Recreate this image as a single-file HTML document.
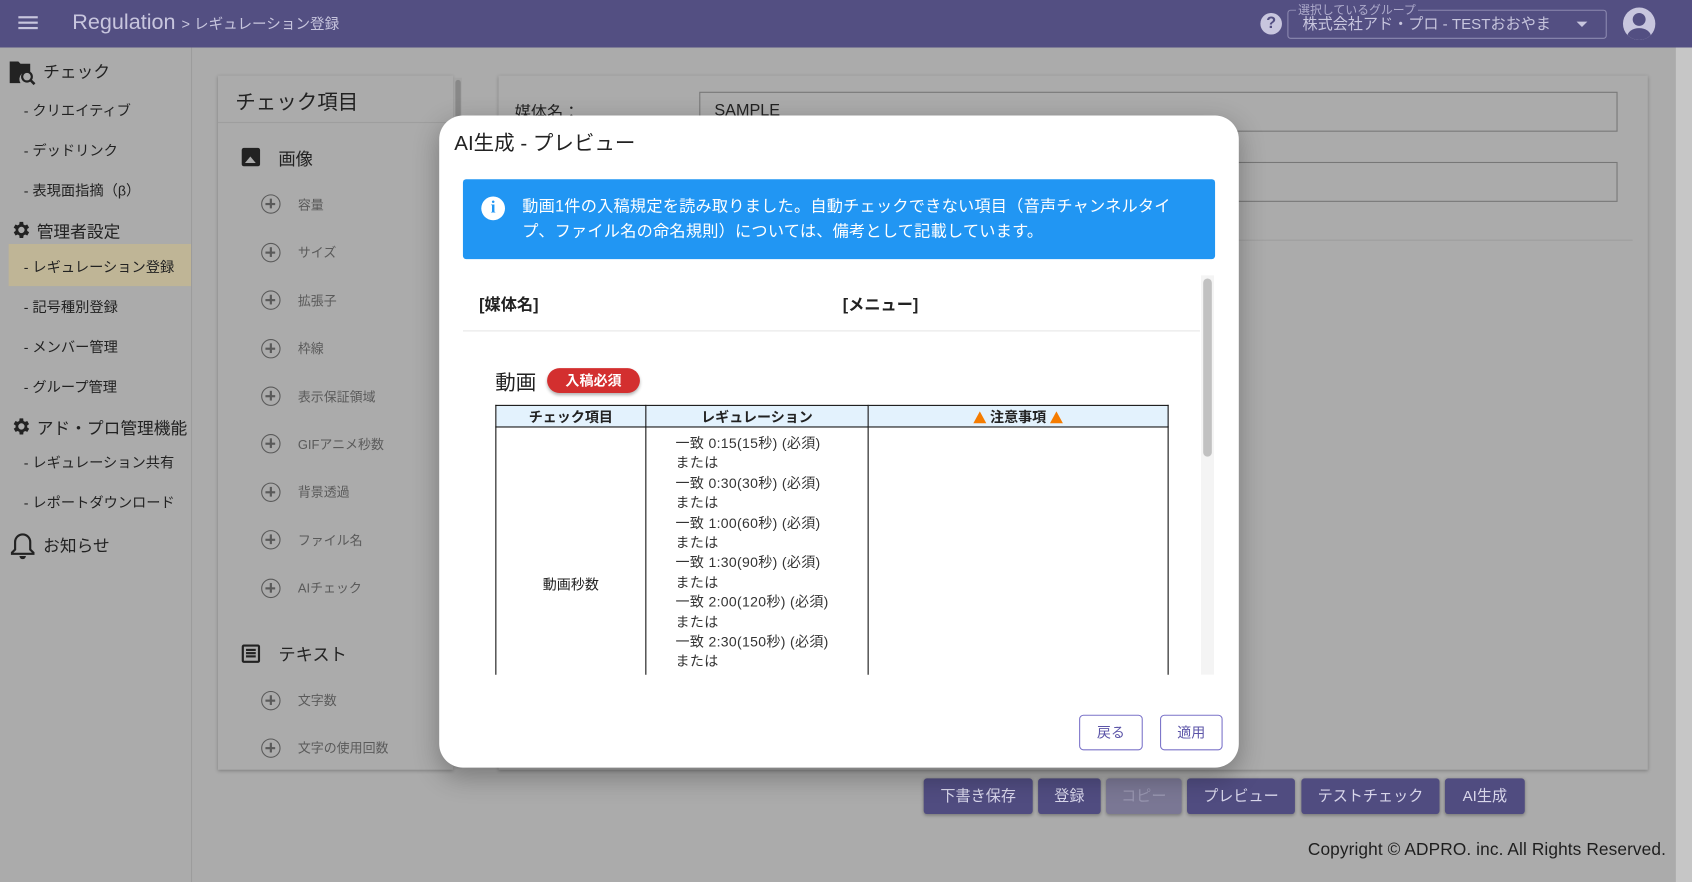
<!DOCTYPE html>
<html><head><meta charset="utf-8"><style>
*{box-sizing:border-box;margin:0;padding:0}
html,body{width:1692px;height:882px;overflow:hidden;background:#ababab}
body{font-family:"Liberation Sans","Noto Sans CJK JP",sans-serif;color:#222}
#w{position:absolute;left:0;top:0;width:1568px;height:817px;transform:scale(1.0791,1.0796);transform-origin:0 0;background:#ababab}
.a{position:absolute;white-space:nowrap}
.hdr{left:0;top:0;width:1568px;height:44px;background:#534f82}
.side{left:0;top:44px;width:178px;height:773px;border-right:1px solid #9c9c9c;background:#ababab}
.si{font-size:13.2px;color:#222;left:22px}
.sh{font-size:15.5px;color:#222}
.ci{font-size:12px;color:#5a5a5a;left:276px}
.pl{left:242px;width:18px;height:18px;border:1.6px solid #5a5a5a;border-radius:50%}
.pl:before,.pl:after{content:"";position:absolute;background:#5a5a5a}
.pl:before{left:3px;top:7px;width:9px;height:1.6px}
.pl:after{left:7px;top:3px;width:1.6px;height:9px}
.btn{top:721px;height:33px;background:#504c80;color:#d8d6ea;font-size:14px;border-radius:3px;text-align:center;line-height:33px;box-shadow:0 1px 3px rgba(0,0,0,.3)}
td,th{border:1px solid #111}
.tri{display:inline-block;width:0;height:0;border:6px solid transparent;border-bottom:11px solid #f57c00;border-top:0;vertical-align:-1px}
</style></head><body><div id="w">
<div class="a hdr"></div>
<div class="a" style="left:17px;top:15px;width:18px;height:2px;background:#c8c6de;box-shadow:0 5px 0 #c8c6de,0 10px 0 #c8c6de"></div>
<div class="a" style="left:67px;top:10px;font-size:20px;color:#c8c6de">Regulation <span style="font-size:13.5px">&gt; レギュレーション登録</span></div>
<div class="a" style="left:1168px;top:12px;width:20px;height:20px;border-radius:50%;background:#c8c6de;color:#534f82;font-size:15px;font-weight:bold;text-align:center;line-height:20px">?</div>
<div class="a" style="left:1193px;top:9px;width:296px;height:27px;border:1px solid #8c89b0;border-radius:3px"></div>
<div class="a" style="left:1201px;top:1px;font-size:11px;color:#aeabcc;background:#534f82;padding:0 2px">選択しているグループ</div>
<div class="a" style="left:1207px;top:12px;font-size:14px;color:#c8c6de">株式会社アド・プロ - TESTおおやま</div>
<div class="a" style="left:1461px;top:20px;border:5px solid transparent;border-top-color:#c8c6de"></div>
<div class="a" style="left:1504px;top:7px;width:30px;height:30px;border-radius:50%;background:#c8c6de;overflow:hidden"><div style="position:absolute;left:9px;top:5px;width:12px;height:12px;border-radius:50%;background:#534f82"></div><div style="position:absolute;left:4px;top:19px;width:22px;height:16px;border-radius:50%;background:#534f82"></div></div>

<div class="a side"></div>
<div class="a" style="left:8px;top:226px;width:169px;height:39px;background:#bfb596"></div>
<svg class="a" style="left:8px;top:54px" width="26" height="26" viewBox="0 0 26 26"><path d="M1 3h8l2 2h9v8a7 7 0 0 0-9 10H1z" fill="#222"/><circle cx="17" cy="17" r="4.5" fill="none" stroke="#222" stroke-width="2"/><path d="M20 20l4 4" stroke="#222" stroke-width="2.4"/></svg>
<div class="a sh" style="left:40px;top:55px">チェック</div>
<div class="a si" style="top:92px">- クリエイティブ</div>
<div class="a si" style="top:129px">- デッドリンク</div>
<div class="a si" style="top:166px">- 表現面指摘（β）</div>
<svg class="a" style="left:9px;top:203px" width="20" height="20" viewBox="0 0 24 24"><path fill="#222" d="M19.4 13a7.5 7.5 0 0 0 0-2l2.1-1.6-2-3.5-2.5 1a7.3 7.3 0 0 0-1.7-1L15 3h-4l-.4 2.9a7.3 7.3 0 0 0-1.7 1l-2.5-1-2 3.5L6.6 11a7.5 7.5 0 0 0 0 2l-2.1 1.6 2 3.5 2.5-1a7.3 7.3 0 0 0 1.7 1L11 21h4l.4-2.9a7.3 7.3 0 0 0 1.7-1l2.5 1 2-3.5zM13 15.5a3.5 3.5 0 1 1 0-7 3.5 3.5 0 0 1 0 7z"/></svg>
<div class="a sh" style="left:34px;top:203px">管理者設定</div>
<div class="a si" style="top:237px">- レギュレーション登録</div>
<div class="a si" style="top:274px">- 記号種別登録</div>
<div class="a si" style="top:311px">- メンバー管理</div>
<div class="a si" style="top:348px">- グループ管理</div>
<svg class="a" style="left:9px;top:385px" width="20" height="20" viewBox="0 0 24 24"><path fill="#222" d="M19.4 13a7.5 7.5 0 0 0 0-2l2.1-1.6-2-3.5-2.5 1a7.3 7.3 0 0 0-1.7-1L15 3h-4l-.4 2.9a7.3 7.3 0 0 0-1.7 1l-2.5-1-2 3.5L6.6 11a7.5 7.5 0 0 0 0 2l-2.1 1.6 2 3.5 2.5-1a7.3 7.3 0 0 0 1.7 1L11 21h4l.4-2.9a7.3 7.3 0 0 0 1.7-1l2.5 1 2-3.5zM13 15.5a3.5 3.5 0 1 1 0-7 3.5 3.5 0 0 1 0 7z"/></svg>
<div class="a sh" style="left:34px;top:385px">アド・プロ管理機能</div>
<div class="a si" style="top:418px">- レギュレーション共有</div>
<div class="a si" style="top:455px">- レポートダウンロード</div>
<svg class="a" style="left:10px;top:492px" width="22" height="26" viewBox="0 0 22 26"><path d="M11 3a7 7 0 0 0-7 7v7l-3 3v1h20v-1l-3-3v-7a7 7 0 0 0-7-7z" fill="none" stroke="#222" stroke-width="2"/><path d="M8 23a3 3 0 0 0 6 0" fill="#222"/></svg>
<div class="a sh" style="left:40px;top:494px">お知らせ</div>

<div class="a" style="left:202px;top:70px;width:218px;height:643px;background:#ababab;box-shadow:0 1px 3px rgba(0,0,0,.25)"></div>
<div class="a" style="left:421px;top:72px;width:7px;height:640px;background:#a4a4a4"></div>
<div class="a" style="left:422px;top:74px;width:5px;height:40px;background:#888;border-radius:3px"></div>
<div class="a" style="left:218px;top:80px;font-size:19px;color:#222">チェック項目</div>
<div class="a" style="left:202px;top:113px;width:218px;height:1px;background:#9e9e9e"></div>
<div class="a" style="left:224px;top:137px;width:17px;height:17px;background:#222;border-radius:2px"><div style="position:absolute;left:3px;top:8px;border:5px solid transparent;border-bottom-color:#ababab;border-width:0 5px 6px"></div></div>
<div class="a" style="left:258px;top:134px;font-size:16px">画像</div>
<div class="a pl" style="top:180px"></div><div class="a ci" style="top:181px">容量</div>
<div class="a pl" style="top:225px"></div><div class="a ci" style="top:225px">サイズ</div>
<div class="a pl" style="top:269px"></div><div class="a ci" style="top:270px">拡張子</div>
<div class="a pl" style="top:314px"></div><div class="a ci" style="top:314px">枠線</div>
<div class="a pl" style="top:358px"></div><div class="a ci" style="top:359px">表示保証領域</div>
<div class="a pl" style="top:402px"></div><div class="a ci" style="top:403px">GIFアニメ秒数</div>
<div class="a pl" style="top:447px"></div><div class="a ci" style="top:447px">背景透過</div>
<div class="a pl" style="top:491px"></div><div class="a ci" style="top:492px">ファイル名</div>
<div class="a pl" style="top:536px"></div><div class="a ci" style="top:536px">AIチェック</div>
<div class="a" style="left:224px;top:597px;width:17px;height:17px;border:2px solid #222;border-radius:2px"><div style="margin:2px 2px;height:1.5px;background:#222;box-shadow:0 3px 0 #222,0 6px 0 #222"></div></div>
<div class="a" style="left:258px;top:593px;font-size:16px">テキスト</div>
<div class="a pl" style="top:640px"></div><div class="a ci" style="top:640px">文字数</div>
<div class="a pl" style="top:684px"></div><div class="a ci" style="top:684px">文字の使用回数</div>

<div class="a" style="left:462px;top:70px;width:1065px;height:643px;background:#ababab;box-shadow:0 1px 3px rgba(0,0,0,.25)"></div>
<div class="a" style="left:463px;top:222px;width:1050px;height:1px;background:#9e9e9e"></div>
<div class="a" style="left:477px;top:93px;font-size:15px">媒体名：</div>
<div class="a" style="left:648px;top:85px;width:851px;height:37px;border:1px solid #777"></div>
<div class="a" style="left:662px;top:94px;font-size:15px">SAMPLE</div>
<div class="a" style="left:648px;top:150px;width:851px;height:37px;border:1px solid #777"></div>
<div class="a" style="left:1553px;top:44px;width:15px;height:773px;background:#c6c6c6"></div>

<div class="a btn" style="left:856px;width:101px">下書き保存</div>
<div class="a btn" style="left:962px;width:58px">登録</div>
<div class="a btn" style="left:1025px;width:70px;background:#7a7794;color:#9896b0">コピー</div>
<div class="a btn" style="left:1100px;width:100px">プレビュー</div>
<div class="a btn" style="left:1206px;width:128px">テストチェック</div>
<div class="a btn" style="left:1339px;width:74px">AI生成</div>
<div class="a" style="left:1212px;top:779px;font-size:16px;color:#1e1e1e;letter-spacing:0.1px">Copyright © ADPRO. inc. All Rights Reserved.</div>

<div class="a" style="left:407px;top:107px;width:741px;height:604px;background:#fff;border-radius:22px;box-shadow:0 8px 24px rgba(0,0,0,.3)"></div>
<div class="a" style="left:421px;top:118px;font-size:19px;color:#222">AI生成 - プレビュー</div>
<div class="a" style="left:429px;top:166px;width:697px;height:74px;background:#2196f3;border-radius:3px"></div>
<div class="a" style="left:446px;top:182px;width:22px;height:22px;border-radius:50%;background:#fff;color:#2196f3;font-weight:bold;font-size:16px;text-align:center;line-height:22px;font-family:'Liberation Serif',serif">i</div>
<div class="a" style="left:484px;top:180px;font-size:15px;color:#fff;line-height:23px;letter-spacing:0.2px">動画1件の入稿規定を読み取りました。自動チェックできない項目（音声チャンネルタイ<br>プ、ファイル名の命名規則）については、備考として記載しています。</div>
<div class="a" style="left:429px;top:255px;width:697px;height:370px;overflow:hidden">
 <div class="a" style="left:684px;top:0;width:12px;height:370px;background:#f4f4f4"></div>
 <div class="a" style="left:686px;top:3px;width:8px;height:165px;background:#c1c1c1;border-radius:4px"></div>
 <div class="a" style="left:15px;top:16px;font-size:15px;font-weight:bold">[媒体名]</div>
 <div class="a" style="left:352px;top:16px;font-size:15px;font-weight:bold">[メニュー]</div>
 <div class="a" style="left:0;top:51px;width:683px;height:1px;background:#e6e6e6"></div>
 <div class="a" style="left:30px;top:85px;font-size:19px">動画</div>
 <div class="a" style="left:78px;top:86px;width:86px;height:23px;background:#d32f2f;border-radius:12px;color:#fff;font-size:13px;font-weight:bold;text-align:center;line-height:23px;box-shadow:0 2px 3px rgba(0,0,0,.3)">入稿必須</div>
 <table class="a" style="left:30px;top:120px;width:624px;border-collapse:collapse;font-size:13px">
  <tr style="background:#e3f2fd;height:20px;font-weight:bold"><th style="width:139px">チェック項目</th><th style="width:206px">レギュレーション</th><th><span class="tri"></span> 注意事項 <span class="tri"></span></th></tr>
  <tr style="height:320px"><td style="text-align:center;vertical-align:top;padding-top:135px">動画秒数</td><td></td><td></td></tr>
 </table>
</div>
<div class="a" style="left:626px;top:402px;font-size:13px;color:#333;line-height:18.4px;letter-spacing:0.3px">一致 0:15(15秒) (必須)<br>または<br>一致 0:30(30秒) (必須)<br>または<br>一致 1:00(60秒) (必須)<br>または<br>一致 1:30(90秒) (必須)<br>または<br>一致 2:00(120秒) (必須)<br>または<br>一致 2:30(150秒) (必須)<br>または</div>
<div class="a" style="left:1000px;top:662px;width:59px;height:33px;border:1px solid #7b73c9;border-radius:4px;color:#5c55a8;font-size:13px;text-align:center;line-height:31px">戻る</div>
<div class="a" style="left:1075px;top:662px;width:58px;height:33px;border:1px solid #7b73c9;border-radius:4px;color:#5c55a8;font-size:13px;text-align:center;line-height:31px">適用</div>
</div></body></html>
